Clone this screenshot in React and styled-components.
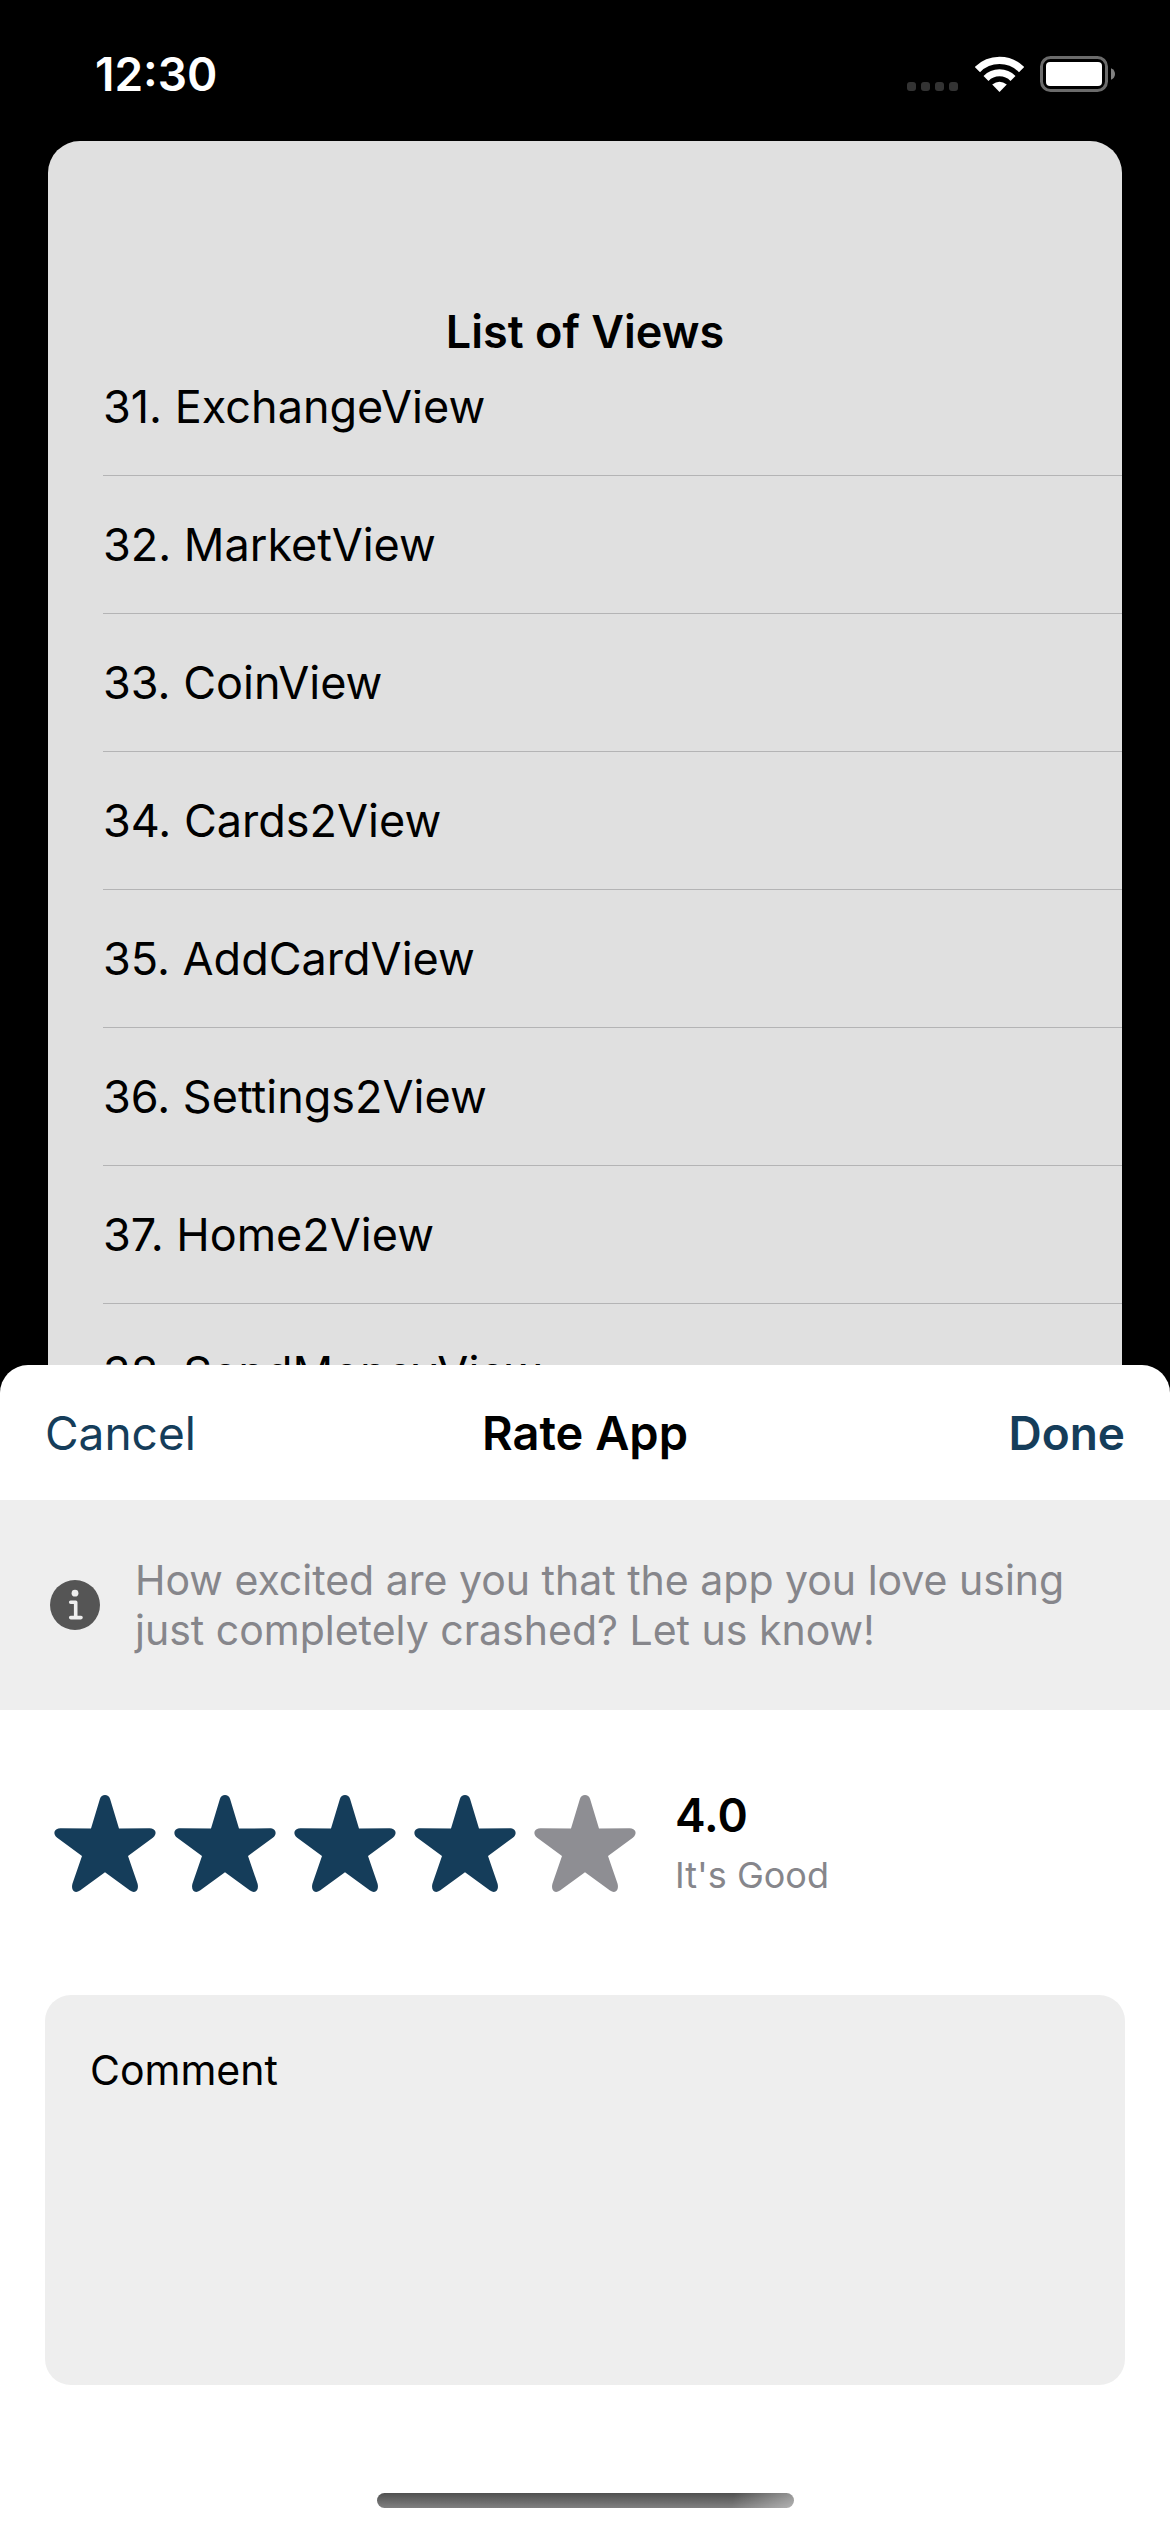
import React, { useState } from "react";
import styled, { createGlobalStyle } from "styled-components";

const ink = "#153d5a";
const muted = "#86868b";
const field = "#eeeeee";

const GlobalStyle = createGlobalStyle`
  *, *::before, *::after { box-sizing: border-box; }
  html, body { margin: 0; background: #000; }
  body, button, textarea {
    font-family: Inter, "Liberation Sans", sans-serif;
  }
`;

const Screen = styled.div`
  display: flex;
  flex-direction: column;
  height: 100vh;
  background: #000;
`;

const StatusBar = styled.header`
  display: flex;
  justify-content: space-between;
  align-items: center;
  padding: 44px 55px 37px 95px;
  color: #fff;
`;

const Clock = styled.time`
  font-size: 46px;
  font-weight: 600;
  line-height: 60px;
`;

const StatusIcons = styled.div`
  display: flex;
  align-items: center;
  gap: 16px;

  svg { display: block; }
`;

const BackCard = styled.main`
  flex: 1 1 0;
  min-height: 0;
  display: flex;
  flex-direction: column;
  margin: 0 48px;
  overflow: hidden;
  border-radius: 32px 32px 0 0;
  background: #e0e0e0;
`;

const CardTitle = styled.h1`
  margin: 0;
  padding: 161px 0 28px;
  font-size: 45px;
  font-weight: 600;
  line-height: 60px;
  text-align: center;
`;

const ListWindow = styled.div`
  flex: 1;
  min-height: 0;
  overflow: hidden;
`;

const ViewList = styled.ul`
  margin: -52px 0 0;
  padding: 0 0 0 55px;
  list-style: none;
`;

const ViewRow = styled.li`
  display: flex;
  align-items: center;
  height: 138px;
  border-bottom: 1px solid #b4b4b5;
  font-size: 45px;
  line-height: 60px;
`;

const Sheet = styled.section`
  flex: none;
  border-radius: 28px 28px 0 0;
  background: #fff;
`;

const SheetHeader = styled.div`
  display: grid;
  grid-template-columns: 1fr auto 1fr;
  align-items: center;
  height: 135px;
  padding: 0 45px;
`;

const SheetTitle = styled.h2`
  margin: 0;
  font-size: 47px;
  font-weight: 600;
  line-height: 60px;
`;

const BarButton = styled.button`
  justify-self: ${(p) => (p.$primary ? "end" : "start")};
  padding: 0;
  border: 0;
  background: none;
  color: ${ink};
  font-size: 46px;
  font-weight: ${(p) => (p.$primary ? 600 : 400)};
  line-height: 60px;
`;

const Notice = styled.div`
  display: flex;
  align-items: center;
  gap: 35px;
  padding: 55px 45px 55px 50px;
  background: ${field};

  svg { flex: none; }
`;

const NoticeText = styled.p`
  margin: 0;
  color: ${muted};
  font-size: 41px;
  line-height: 50px;
`;

const RatingRow = styled.div`
  display: flex;
  align-items: center;
  gap: 30px;
  padding: 75px 45px 90px;
`;

const Stars = styled.fieldset`
  display: flex;
  min-width: 0;
  margin: 0;
  padding: 0;
  border: 0;
`;

const StarLabel = styled.label`
  position: relative;
  display: block;
  width: 120px;
  height: 120px;
  color: ${(p) => (p.$on ? ink : "#8e8e93")};

  svg { display: block; }
`;

const StarInput = styled.input`
  position: absolute;
  inset: 0;
  width: 100%;
  height: 100%;
  margin: 0;
  opacity: 0;
`;

const Score = styled.output`
  display: flex;
  flex-direction: column;
`;

const ScoreValue = styled.strong`
  font-size: 46px;
  font-weight: 600;
  line-height: 60px;
`;

const ScoreText = styled.span`
  color: ${muted};
  font-size: 36px;
  line-height: 60px;
`;

const CommentArea = styled.div`
  padding: 0 45px;
`;

const CommentBox = styled.textarea`
  display: block;
  width: 100%;
  height: 390px;
  padding: 45px;
  border: 0;
  border-radius: 26px;
  outline: 0;
  resize: none;
  background: ${field};
  color: #000;
  font-size: 41px;
  line-height: 60px;
`;

const HomeArea = styled.div`
  display: flex;
  justify-content: center;
  padding: 108px 0 24px;
`;

const HomeBar = styled.div`
  width: 417px;
  height: 15px;
  border-radius: 8px;
  background:
    linear-gradient(100deg, transparent 85%, rgba(255, 255, 255, 0.4) 100%),
    linear-gradient(#505050, #808080);
`;

const SignalIcon = () => (
  <svg width="52" height="36" viewBox="0 0 52 36" fill="#333" aria-hidden="true">
    {[0, 14, 28, 42].map((x) => (
      <rect key={x} x={x} y="26" width="9" height="9" rx="3" />
    ))}
  </svg>
);

const WifiIcon = () => (
  <svg width="49" height="36" viewBox="0 0 49 36" fill="none" stroke="#fff" aria-hidden="true">
    <path d="M2.4 13.6A31.2 31.2 0 0 1 46.6 13.6" strokeWidth="7.4" />
    <path d="M11 22.5A19 19 0 0 1 38 22.5" strokeWidth="7" />
    <path d="M17.2 28.6Q24.5 22.8 31.8 28.6L24.5 36Z" fill="#fff" stroke="none" />
  </svg>
);

const BatteryIcon = () => (
  <svg width="75" height="36" viewBox="0 0 75 36" aria-hidden="true">
    <rect x="1.5" y="1.5" width="65" height="33" rx="9" fill="none" stroke="#6b6b6b" strokeWidth="3" />
    <rect x="6" y="6" width="56" height="24" rx="4" fill="#fff" />
    <path d="M71 12.2Q75 14 75 18T71 23.8Z" fill="#808080" />
  </svg>
);

const InfoIcon = () => (
  <svg width="50" height="50" viewBox="0 0 50 50" aria-hidden="true">
    <circle cx="25" cy="25" r="25" fill="#555" />
    <circle cx="25" cy="13.2" r="3.4" fill={field} />
    <path
      d="M20.7 22.3H25.7V37.6M20.7 37.6H31"
      fill="none"
      stroke={field}
      strokeWidth="3.6"
      strokeLinecap="round"
      strokeLinejoin="round"
    />
  </svg>
);

const StarIcon = () => (
  <svg width="120" height="120" viewBox="0 0 120 120" fill="currentColor" aria-hidden="true">
    <path d="M54.9 14C56.3 8.7 63.7 8.7 65.1 14L74 43.6L104.5 43.3C110.8 43.3 112.8 48.9 107.8 52.7L83 71L92.5 98.5C94.3 105 90.5 109.3 85 105.6L60 87.3L35 105.6C29.5 109.3 25.7 105 27.5 98.5L37 71L12.2 52.7C7.2 48.9 9.2 43.3 15.5 43.3L46 43.6Z" />
  </svg>
);

const views = [
  [31, "ExchangeView"],
  [32, "MarketView"],
  [33, "CoinView"],
  [34, "Cards2View"],
  [35, "AddCardView"],
  [36, "Settings2View"],
  [37, "Home2View"],
  [38, "SendMoneyView"],
];

const verdicts = ["It's Terrible", "It's Bad", "It's OK", "It's Good", "It's Great"];

export default function App() {
  const [rating, setRating] = useState(4);
  const [comment, setComment] = useState("Comment");

  return (
    <Screen>
      <GlobalStyle />
      <StatusBar>
        <Clock>12:30</Clock>
        <StatusIcons>
          <SignalIcon />
          <WifiIcon />
          <BatteryIcon />
        </StatusIcons>
      </StatusBar>

      <BackCard>
        <CardTitle>List of Views</CardTitle>
        <ListWindow>
          <ViewList>
            {views.map(([number, name]) => (
              <ViewRow key={number}>{`${number}. ${name}`}</ViewRow>
            ))}
          </ViewList>
        </ListWindow>
      </BackCard>

      <Sheet>
        <SheetHeader>
          <BarButton type="button">Cancel</BarButton>
          <SheetTitle>Rate App</SheetTitle>
          <BarButton type="button" $primary>Done</BarButton>
        </SheetHeader>

        <Notice>
          <InfoIcon />
          <NoticeText>
            How excited are you that the app you love using just completely crashed? Let us know!
          </NoticeText>
        </Notice>

        <RatingRow>
          <Stars aria-label="Rating">
            {verdicts.map((verdict, i) => (
              <StarLabel key={verdict} $on={i < rating}>
                <StarInput
                  type="radio"
                  name="rating"
                  value={i + 1}
                  aria-label={verdict}
                  checked={rating === i + 1}
                  onChange={() => setRating(i + 1)}
                />
                <StarIcon />
              </StarLabel>
            ))}
          </Stars>
          <Score>
            <ScoreValue>{rating.toFixed(1)}</ScoreValue>
            <ScoreText>{verdicts[rating - 1]}</ScoreText>
          </Score>
        </RatingRow>

        <CommentArea>
          <CommentBox
            aria-label="Comment"
            value={comment}
            onChange={(e) => setComment(e.target.value)}
          />
        </CommentArea>

        <HomeArea>
          <HomeBar />
        </HomeArea>
      </Sheet>
    </Screen>
  );
}
